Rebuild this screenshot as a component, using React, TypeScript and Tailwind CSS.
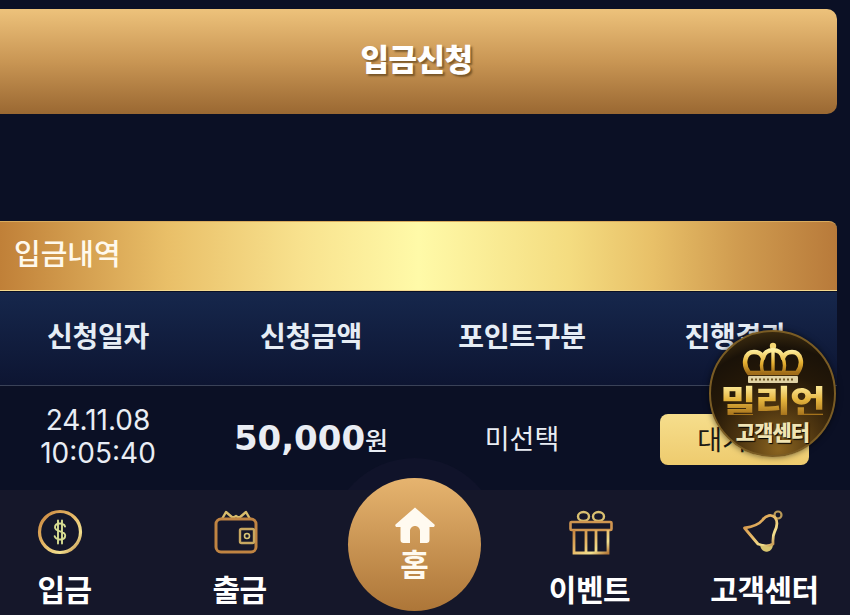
import React from 'react';

const KR = "font-['Noto_Sans_CJK_KR','Noto_Sans',sans-serif]";

const GoldDefs = ({ id }: { id: string }) => (
  <defs>
    <linearGradient id={id} x1="0" y1="0" x2="1" y2="1">
      <stop offset="0%" stopColor="#c9853f" />
      <stop offset="45%" stopColor="#e6b765" />
      <stop offset="75%" stopColor="#f2e08f" />
      <stop offset="100%" stopColor="#b57a3a" />
    </linearGradient>
  </defs>
);

const CoinIcon = () => (
  <svg width="46" height="46" viewBox="0 0 46 46" fill="none" className="-translate-x-[5px]">
    <GoldDefs id="coin" />
    <circle cx="23" cy="23" r="20.5" stroke="url(#coin)" strokeWidth="3.2" />
    <path
      d="M28 17.500c-.6-2-2.500-3-5-3-2.800 0-5 1.400-5 3.800 0 5.200 10.200 2.800 10.200 8.200 0 2.500-2.300 4-5.200 4-2.800 0-4.800-1.200-5.400-3.400M21 11.500v23M25 11.500v23"
      stroke="#d8dd92"
      strokeWidth="1.900"
      strokeLinecap="round"
    />
  </svg>
);

const WalletIcon = () => (
  <svg width="44" height="46" viewBox="0 0 44 46" fill="none" className="-translate-x-[4px]">
    <GoldDefs id="wallet" />
    <path d="M8 10 12 3l7 6M36 10l-4-7-7 6M19 9l3-2 3 2" stroke="#d9bd6c" strokeWidth="2.400" strokeLinejoin="round" />
    <rect x="2" y="10" width="40" height="33" rx="5" stroke="#c08442" strokeWidth="3" />
    <rect x="26" y="20" width="14" height="14" rx="1.500" stroke="#c7a760" strokeWidth="2.400" />
    <circle cx="33" cy="27" r="2.500" stroke="#d9c576" strokeWidth="1.600" />
  </svg>
);

const GiftIcon = () => (
  <svg width="44" height="46" viewBox="0 0 44 46" fill="none" className="translate-x-[1px]">
    <GoldDefs id="gift" />
    <ellipse cx="14.500" cy="7.500" rx="5.500" ry="4.500" stroke="#d9c071" strokeWidth="2.400" />
    <ellipse cx="29.500" cy="7.500" rx="5.500" ry="4.500" stroke="#d9c071" strokeWidth="2.400" />
    <rect x="1.500" y="13" width="41" height="8" rx="1" stroke="#cf9550" strokeWidth="2.600" />
    <path d="M5 21v23h34V21M17 21v23M27 21v23" stroke="url(#gift)" strokeWidth="2.800" />
  </svg>
);

const BellIcon = () => (
  <svg width="44" height="46" viewBox="0 0 44 46" fill="none" className="-translate-x-[1px]">
    <GoldDefs id="bell" />
    <circle cx="36" cy="6" r="3.500" stroke="#b99a58" strokeWidth="2.200" />
    <path
      d="M33 8.500C29.500 5 24 6 20.500 11 17 15.500 9 18 2.500 19L16 35c6 2 10 3 15 0 0-5-.5-8 1.500-12 2.500-5 3.500-10.500.5-14.500Z"
      stroke="url(#bell)"
      strokeWidth="2.800"
      strokeLinejoin="round"
    />
    <path d="M18 36c1 5 4 7.500 8 6.500 3-.7 4.500-3 5-6.500-4 2-9 2-13 0Z" fill="#d8c56f" />
  </svg>
);

const HomeIcon = () => (
  <svg width="40" height="36" viewBox="0 0 40 36" fill="#fffaf0">
    <path d="M20 0.500 39.500 17.500c.6 1.400 0 2.500-1.500 2.500H34.500v13c0 1.700-1.300 3-3 3H25V24c0-2.800-2.200-5-5-5s-5 2.200-5 5v12H8.500c-1.700 0-3-1.300-3-3V20H2c-1.500 0-2.100-1.100-1.500-2.500L20 .5Z" />
  </svg>
);

const Crown = () => (
  <svg width="62" height="44" viewBox="0 0 62 44" fill="none">
    <defs>
      <linearGradient id="crown" x1="0" y1="0" x2="0" y2="1">
        <stop offset="0%" stopColor="#fff0a0" />
        <stop offset="55%" stopColor="#e6b030" />
        <stop offset="100%" stopColor="#a06c18" />
      </linearGradient>
    </defs>
    <circle cx="31" cy="4" r="3.200" fill="#f5d774" />
    <path
      d="M7 31C0 22 3 10 12 10c5 0 8 3 9 6 1-5 5-8 10-8s9 3 10 8c1-3 4-6 9-6 9 0 12 12 5 21Z"
      stroke="url(#crown)"
      strokeWidth="4.500"
      strokeLinejoin="round"
    />
    <path d="M21 16c-2 5-2 10 0 15M41 16c2 5 2 10 0 15M31 9v22" stroke="url(#crown)" strokeWidth="3.400" />
    <rect x="6" y="34" width="50" height="7" rx="1" fill="#e0d2a4" />
    <path d="M9 37.500h44" stroke="#6b5320" strokeWidth="2" strokeDasharray="2 2" />
  </svg>
);

const NavItem = ({ icon, label }: { icon: React.ReactNode; label: string }) => (
  <div className="flex flex-col items-center">
    <div className="h-[46px] flex items-center">{icon}</div>
    <span className="mt-[13px] text-[30px] leading-[40px] font-bold text-white tracking-[-0.5px]">{label}</span>
  </div>
);

export default function App() {
  return (
    <div className={`${KR} relative w-[850px] h-[615px] overflow-hidden bg-[#0b1025] flex flex-col`}>
      <div className="pt-[9px] pr-[13px]">
        <button className="w-full h-[105px] pb-[6px] pr-[4px] rounded-r-[10px] bg-gradient-to-b from-[#edc27b] via-[#c99654] to-[#9a6832] flex items-center justify-center text-[31px] font-black text-white tracking-[-0.5px] [text-shadow:2px_2px_2px_rgba(60,40,10,0.55)]">
          입금신청
        </button>

        <div className="mt-[107px] h-[70px] pb-[6px] rounded-tr-[8px] border-y border-t-[#d9ab5e] border-b-[#f3d98f] bg-[linear-gradient(90deg,#c08038_0%,#e9bf68_20%,#f8e28e_36%,#fffaa8_50%,#f4dc80_68%,#e8c068_78%,#d09c50_88%,#b87a3a_100%)] flex items-center pl-[14px] text-[29px] font-medium text-[#fff9ec]">
          입금내역
        </div>

        <div className="mt-px grid grid-cols-[196px_230px_192px_1fr] h-[94px] pb-[8px] items-center text-center text-[28px] font-bold text-[#e6edf5] tracking-[-0.3px] bg-gradient-to-b from-[#16274c] to-[#0d1532] border-b border-[#3a4258]">
          <div>신청일자</div>
          <div>신청금액</div>
          <div>포인트구분</div>
          <div className="pl-4">진행결과</div>
        </div>

        <div className="grid grid-cols-[196px_230px_192px_1fr] h-[104px] items-center text-center text-[#e9edf4]">
          <div className="font-['Inter',sans-serif] text-[28px] leading-[33px] font-normal pb-[3px]">
            <div>24.11.08</div>
            <div>10:05:40</div>
          </div>
          <div className="flex items-baseline justify-center">
            <span className="font-['DejaVu_Sans',sans-serif] text-[34px] font-bold">50,000</span>
            <span className="text-[25px] font-medium">원</span>
          </div>
          <div className="text-[27px]">미선택</div>
          <div className="pl-[14px] flex justify-center pt-[3px]">
            <div className="w-[149px] h-[51px] rounded-[8px] bg-gradient-to-b from-[#f6de8c] to-[#eecb6e] flex items-center justify-center text-[27px] text-[#1c1a14]">
              대기중
            </div>
          </div>
        </div>
      </div>

      {/* faint halo peeks above the nav, nav covers the rest */}
      <div className="absolute left-[329px] top-[458px] w-[171px] h-[171px] rounded-full bg-[#10132a]" />

      <nav className="flex-1 bg-[#15172a] ml-[-23px] w-[875px] grid grid-cols-5 pt-[19px] relative">
        <NavItem icon={<CoinIcon />} label="입금" />
        <NavItem icon={<WalletIcon />} label="출금" />
        <div />
        <NavItem icon={<GiftIcon />} label="이벤트" />
        <NavItem icon={<BellIcon />} label="고객센터" />
      </nav>

      {/* home button sits over the nav edge */}
      <div className="absolute left-[348px] top-[478px] w-[133px] h-[133px] rounded-full bg-gradient-to-b from-[#e6b46f] to-[#ad7638] flex flex-col items-center justify-center">
        <HomeIcon />
        <span className="text-[31px] leading-[40px] font-bold text-[#fffaf0]">홈</span>
      </div>

      {/* floating customer center badge */}
      <div className="absolute left-[709px] top-[330px] w-[127px] h-[127px] rounded-full border-2 border-[#7a5c24] bg-[radial-gradient(circle_at_55%_95%,#8a6420_0%,#4e3510_30%,#241808_55%,#1a1208_75%,#5a4216_100%)] flex flex-col items-center pt-[10px] shadow-[0_0_6px_rgba(0,0,0,0.6)]">
        <Crown />
        <span className="mt-[-2px] h-[36px] text-[39px] leading-[38px] font-black tracking-[-1px] origin-top scale-y-[0.86] bg-gradient-to-b from-[#fff0a0] via-[#e6b63e] to-[#a8741c] bg-clip-text text-transparent">
          밀리언
        </span>
        <span className="mt-[-1px] text-[21px] leading-[24px] font-black tracking-[-1px] text-[#f0e4b4] [text-shadow:1px_1px_1px_#000]">
          고객센터
        </span>
      </div>
    </div>
  );
}
